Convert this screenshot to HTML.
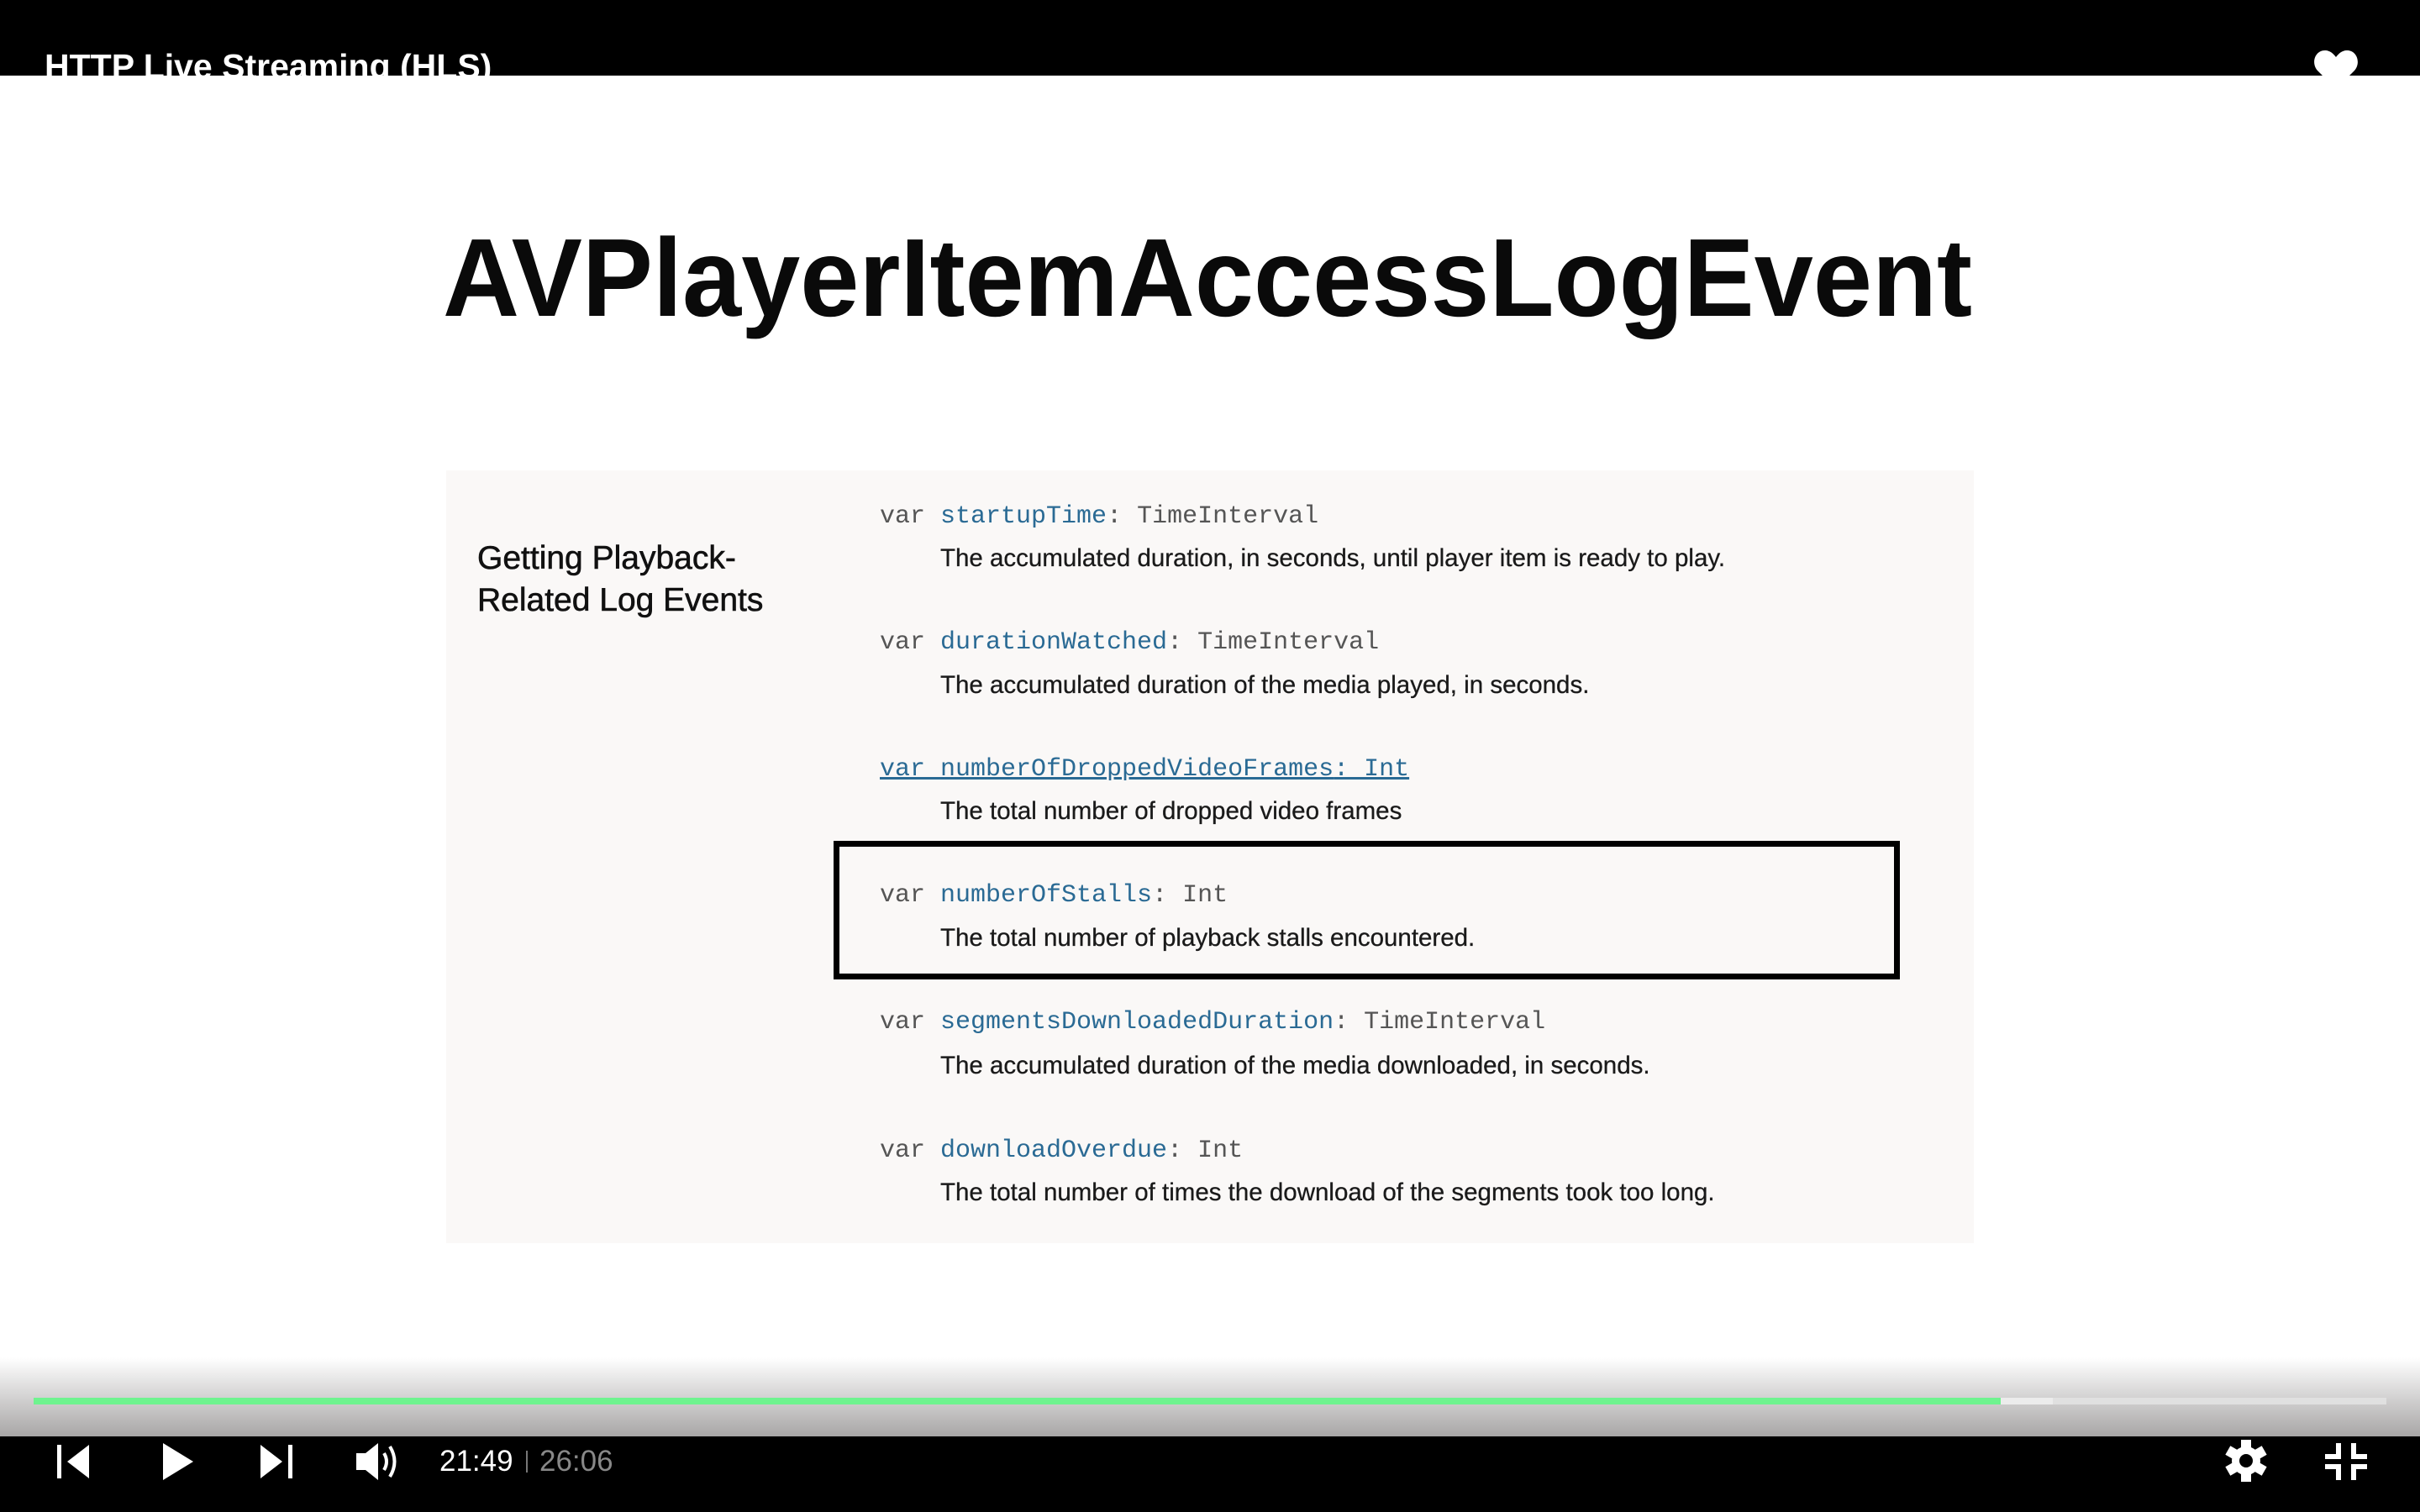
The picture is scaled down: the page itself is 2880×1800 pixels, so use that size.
<!DOCTYPE html>
<html><head><meta charset="utf-8"><style>
html,body{margin:0;padding:0;width:2880px;height:1800px;overflow:hidden;background:#fff;font-family:"Liberation Sans",sans-serif}
.abs{position:absolute}
.top{left:0;top:0;width:2880px;height:90px;background:#000;overflow:hidden}
.title{left:53px;top:56px;color:#fff;font-weight:bold;font-size:41px;white-space:nowrap}
.panel{left:531px;top:560px;width:1818px;height:920px;background:#faf8f7}
.lbl{left:568px;top:640px;font-size:39px;line-height:50px;color:#111;-webkit-text-stroke:0.6px #111}
.code{left:1047px;font-family:"Liberation Mono",monospace;font-size:30px;color:#555;white-space:nowrap}
.code b{font-weight:normal;color:#2a6a94}
.desc{left:1119px;font-size:29.5px;color:#1a1a1a;white-space:nowrap;-webkit-text-stroke:0.3px #1a1a1a}
.box{left:992px;top:1001px;width:1255px;height:151px;border:7px solid #000}
.grad{left:0;top:1616px;width:2880px;height:94px;background:linear-gradient(#fff,#a8a6a6)}
.bar{left:0;top:1710px;width:2880px;height:90px;background:#000}
</style></head><body>
<div class="abs top"><div class="abs title">HTTP Live Streaming (HLS)</div>
<svg class="abs" style="left:2752px;top:58px" width="56" height="50" viewBox="0 0 56 50"><path d="M28 48 L6 26 C-2 17 3 2 15 2 C21 2 25 6 28 10 C31 6 35 2 41 2 C53 2 58 17 50 26 Z" fill="#fff"/></svg></div>
<svg class="abs" style="left:527px;top:250px" width="1830" height="160"><text x="0" y="126" font-family="Liberation Sans" font-weight="bold" font-size="132" textLength="1820" lengthAdjust="spacingAndGlyphs" fill="#0a0a0a">AVPlayerItemAccessLogEvent</text></svg>
<div class="abs panel"></div>
<div class="abs lbl">Getting Playback-<br>Related Log Events</div>
<div class="abs code" style="top:598px">var <b>startupTime</b>: TimeInterval</div>
<div class="abs desc" style="top:648px">The accumulated duration, in seconds, until player item is ready to play.</div>
<div class="abs code" style="top:748px">var <b>durationWatched</b>: TimeInterval</div>
<div class="abs desc" style="top:799px">The accumulated duration of the media played, in seconds.</div>
<div class="abs code" style="top:899px;color:#2a6a94;text-decoration:underline">var <b>numberOfDroppedVideoFrames</b>: Int</div>
<div class="abs desc" style="top:949px">The total number of dropped video frames</div>
<div class="abs box"></div>
<div class="abs code" style="top:1049px">var <b>numberOfStalls</b>: Int</div>
<div class="abs desc" style="top:1100px">The total number of playback stalls encountered.</div>
<div class="abs code" style="top:1200px">var <b>segmentsDownloadedDuration</b>: TimeInterval</div>
<div class="abs desc" style="top:1252px">The accumulated duration of the media downloaded, in seconds.</div>
<div class="abs code" style="top:1353px">var <b>downloadOverdue</b>: Int</div>
<div class="abs desc" style="top:1403px">The total number of times the download of the segments took too long.</div>
<div class="abs grad"></div>
<div class="abs" style="left:40px;top:1664px;width:2800px;height:8px;background:#e0e0e0"></div>
<div class="abs" style="left:40px;top:1664px;width:2403px;height:8px;background:#ececec"></div>
<div class="abs" style="left:40px;top:1664px;width:2341px;height:8px;background:#6ff38f"></div>
<div class="abs bar"></div>
<svg class="abs" style="left:0;top:1710px" width="2880" height="90">
<g fill="#fff">
<rect x="68" y="10" width="5" height="40"/><path d="M106 10 L80 30 L106 50 Z"/>
<path d="M194 8 L230 30 L194 52 Z"/>
<path d="M310 10 L336 30 L310 50 Z"/><rect x="343" y="10" width="5" height="40"/>
<rect x="424" y="20" width="11" height="20"/><path d="M435 20 L450 8 L450 52 L435 40 Z"/>
</g>
<g fill="none" stroke="#fff" stroke-width="4"><path d="M457 20 Q463 30 457 40"/><path d="M464 12 Q475 30 464 48"/></g>
<text x="523" y="41" font-family="Liberation Sans" font-size="35" fill="#fff">21:49</text>
<rect x="626" y="17" width="2" height="26" fill="#777"/>
<text x="642" y="41" font-family="Liberation Sans" font-size="35" fill="#888">26:06</text>
<g transform="translate(2673,29)" fill="#fff">
<circle r="17"/>
<g><rect x="-6" y="-25" width="12" height="50"/><rect x="-6" y="-25" width="12" height="50" transform="rotate(60)"/><rect x="-6" y="-25" width="12" height="50" transform="rotate(120)"/></g>
<circle r="8" fill="#000"/></g>
<g fill="none" stroke="#fff" stroke-width="6"><path d="M2783 8 V24 H2767"/><path d="M2801 8 V24 H2817"/><path d="M2783 52 V36 H2767"/><path d="M2801 52 V36 H2817"/></g>
</svg>
</body></html>
